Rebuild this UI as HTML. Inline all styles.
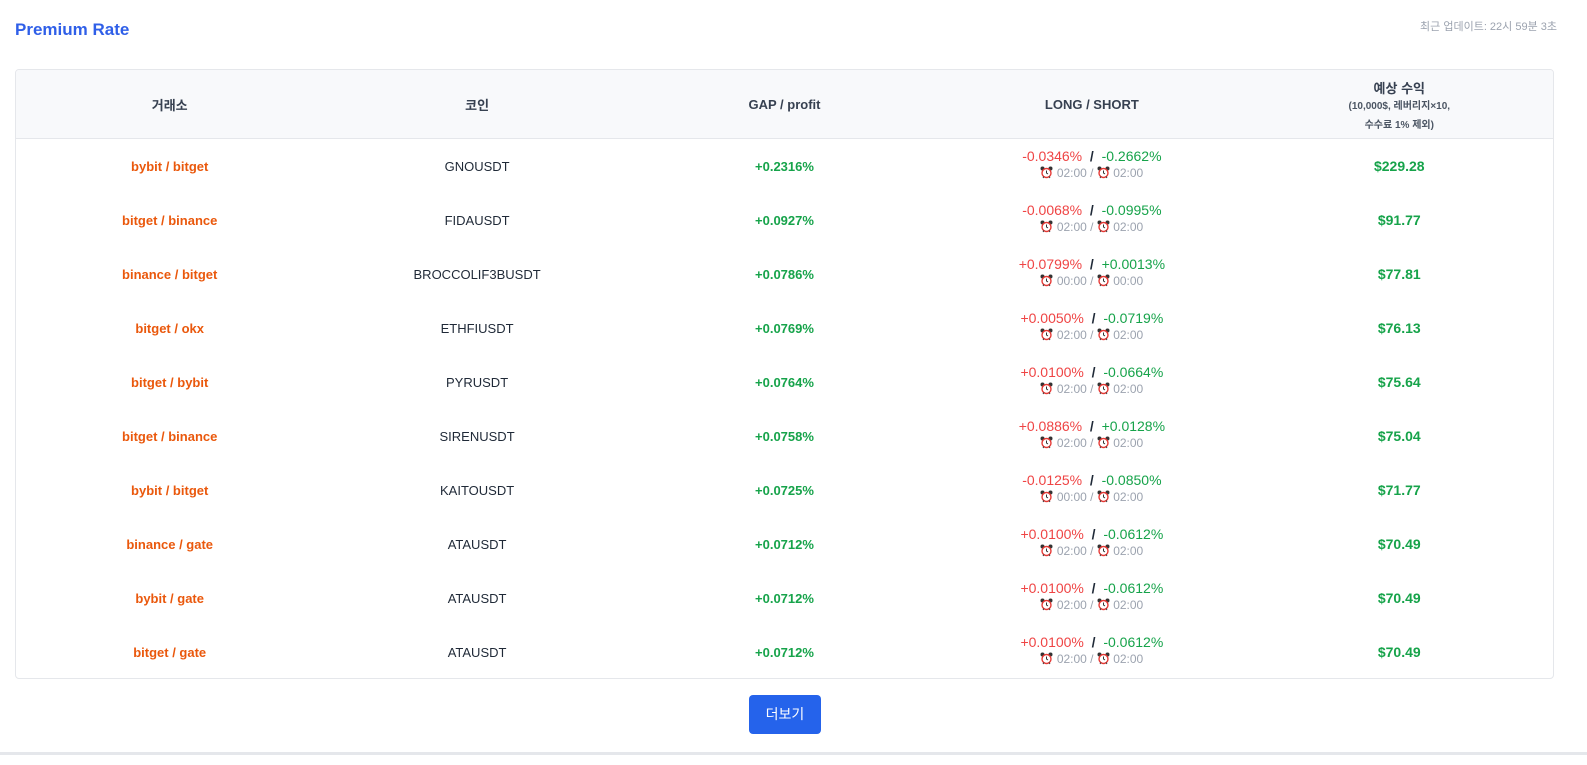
<!DOCTYPE html>
<html><head><meta charset="utf-8"><style>
body{margin:0;background:#fff;font-family:"Liberation Sans","Noto Sans CJK KR",sans-serif;width:1587px;height:765px;overflow:hidden;position:relative}
.title{position:absolute;left:15px;top:20px;font-size:17px;font-weight:bold;color:#2f5fe8}
.upd{position:absolute;right:30px;top:18px;font-size:11px;color:#9ca3af}
.tbl{position:absolute;left:15px;top:69px;width:1537px;height:608px;border:1px solid #e5e7eb;border-radius:4px;overflow:hidden}
table{border-collapse:collapse;width:100%;table-layout:fixed}
th{background:#f8f9fb;height:68px;font-size:13px;color:#374151;font-weight:bold;border-bottom:1px solid #e5e7eb;padding:0}
td{height:54px;text-align:center;padding:0;font-size:13px}
.ex{color:#ea580c;font-weight:bold}
.coin{color:#1f2937}
.g{color:#16a34a;font-weight:bold}
.r{color:#ef4444}
.gr{color:#16a34a}
.ls{font-size:14px;line-height:18px;margin-top:-4px}
.tm{font-size:12px;color:#9ca3af;line-height:16px}
.sub{font-size:10px;line-height:19px;color:#4b5563}
.pr{font-size:14px}
svg{vertical-align:-2px}
.btn{position:absolute;left:749px;top:695px;width:72px;height:39px;background:#2563eb;border-radius:4px;color:#fff;font-size:14px;line-height:39px;text-align:center}
.bot{position:absolute;left:0;top:752px;width:1587px;height:3px;background:#e5e7eb}
</style></head><body>
<div class="title">Premium Rate</div>
<div class="upd">최근 업데이트: 22시 59분 3초</div>
<div class="tbl"><table>
<tr><th>거래소</th><th>코인</th><th>GAP / profit</th><th>LONG / SHORT</th><th><div style="margin-top:4px">예상 수익</div><div class="sub">(10,000$, 레버리지×10,<br>수수료 1% 제외)</div></th></tr>
<tbody id="b"></tbody></table></div>
<div class="btn">더보기</div>
<div class="bot"></div>
<script>
var clk='<svg width="13" height="13" viewBox="0 0 13 13"><circle cx="2.5" cy="2.5" r="2" fill="#333"/><circle cx="10.5" cy="2.5" r="2" fill="#333"/><circle cx="6.5" cy="7" r="5.2" fill="#e53935"/><circle cx="6.5" cy="7" r="3.8" fill="#fff"/><path d="M6.5 4.5V7L8 8" stroke="#333" stroke-width="1" fill="none"/><path d="M3 12l1-1.5M10 12l-1-1.5" stroke="#333" stroke-width="1"/></svg>';
var d=[["bybit / bitget","GNOUSDT","+0.2316%","-0.0346%","-0.2662%","02:00","02:00","$229.28"],
["bitget / binance","FIDAUSDT","+0.0927%","-0.0068%","-0.0995%","02:00","02:00","$91.77"],
["binance / bitget","BROCCOLIF3BUSDT","+0.0786%","+0.0799%","+0.0013%","00:00","00:00","$77.81"],
["bitget / okx","ETHFIUSDT","+0.0769%","+0.0050%","-0.0719%","02:00","02:00","$76.13"],
["bitget / bybit","PYRUSDT","+0.0764%","+0.0100%","-0.0664%","02:00","02:00","$75.64"],
["bitget / binance","SIRENUSDT","+0.0758%","+0.0886%","+0.0128%","02:00","02:00","$75.04"],
["bybit / bitget","KAITOUSDT","+0.0725%","-0.0125%","-0.0850%","00:00","02:00","$71.77"],
["binance / gate","ATAUSDT","+0.0712%","+0.0100%","-0.0612%","02:00","02:00","$70.49"],
["bybit / gate","ATAUSDT","+0.0712%","+0.0100%","-0.0612%","02:00","02:00","$70.49"],
["bitget / gate","ATAUSDT","+0.0712%","+0.0100%","-0.0612%","02:00","02:00","$70.49"]];
var h='';d.forEach(function(r){h+='<tr><td class="ex">'+r[0]+'</td><td class="coin">'+r[1]+'</td><td class="g">'+r[2]+'</td><td><div class="ls"><span class="r">'+r[3]+'</span>&nbsp; <b style="color:#1f2937">/</b> &nbsp;<span class="gr">'+r[4]+'</span></div><div class="tm">'+clk+' '+r[5]+' / '+clk+' '+r[6]+'</div></td><td class="g pr">'+r[7]+'</td></tr>'});
document.getElementById('b').innerHTML=h;
</script>
</body></html>
